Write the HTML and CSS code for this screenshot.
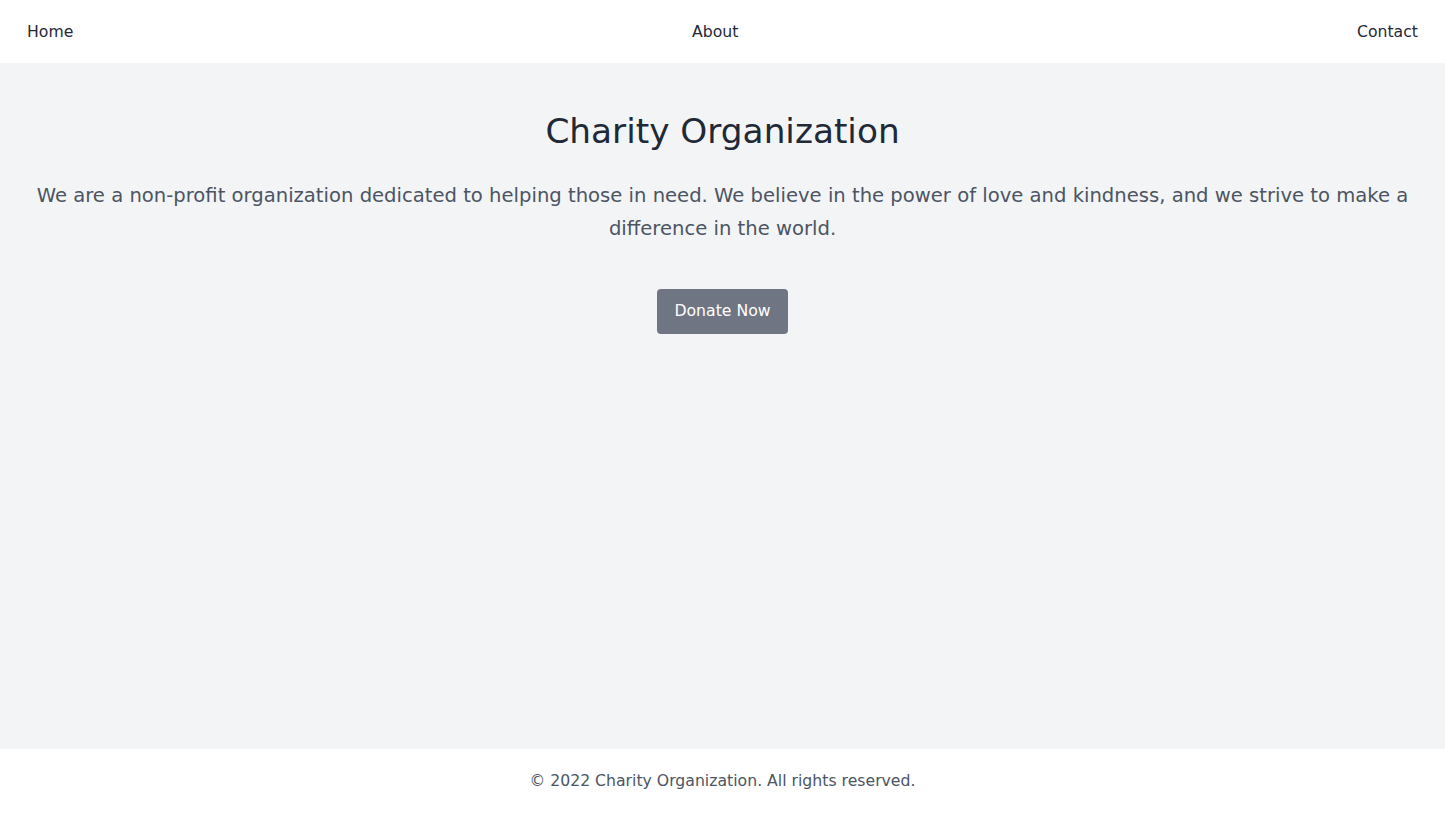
FILE: index.html
```html
<!DOCTYPE html>
<html lang="en">
<head>
<meta charset="utf-8">
<title>Charity Organization</title>
<link rel="stylesheet" href="styles.css">
</head>
<body>
<header class="nav">
  <a class="nav-link" href="#">Home</a>
  <a class="nav-link" href="#">About</a>
  <a class="nav-link" href="#">Contact</a>
</header>
<main class="hero">
  <h1 class="title">Charity Organization</h1>
  <p class="lead">We are a non-profit organization dedicated to helping those in need. We believe in the power of love and kindness, and we strive to make a difference in the world.</p>
  <a class="btn" href="#">Donate Now</a>
</main>
<footer class="footer">© 2022 Charity Organization. All rights reserved.</footer>
</body>
</html>
```

FILE: styles.css
```css
html, body {
  margin: 0;
  padding: 0;
}
body {
  font-family: "DejaVu Sans", sans-serif;
  background: #ffffff;
  color: #1f2937;
  min-height: 813px;
  display: flex;
  flex-direction: column;
}
.nav {
  display: flex;
  justify-content: space-between;
  align-items: center;
  height: 63px;
  padding: 0 27px;
  background: #ffffff;
}
.nav-link {
  color: #1f2937;
  text-decoration: none;
  font-size: 15.7px;
  line-height: 24px;
}
.hero {
  flex: 1;
  background: #f3f4f6;
  display: flex;
  flex-direction: column;
  align-items: center;
  padding: 44px 32px 0;
  text-align: center;
}
.title {
  margin: 0;
  font-size: 34.3px;
  line-height: 48px;
  font-weight: 400;
  color: #1f2937;
}
.lead {
  margin: 24px 0 0;
  font-size: 19.6px;
  line-height: 33px;
  color: #4b5563;
}
.btn {
  margin-top: 44px;
  display: inline-block;
  background: #6f7582;
  color: #ffffff;
  text-decoration: none;
  font-size: 15.7px;
  line-height: 24px;
  padding: 10px 17px 11px;
  border-radius: 4px;
}
.footer {
  height: 64px;
  padding-bottom: 1px;
  box-sizing: border-box;
  display: flex;
  align-items: center;
  justify-content: center;
  background: #ffffff;
  color: #4b5563;
  font-size: 15.7px;
}
```
